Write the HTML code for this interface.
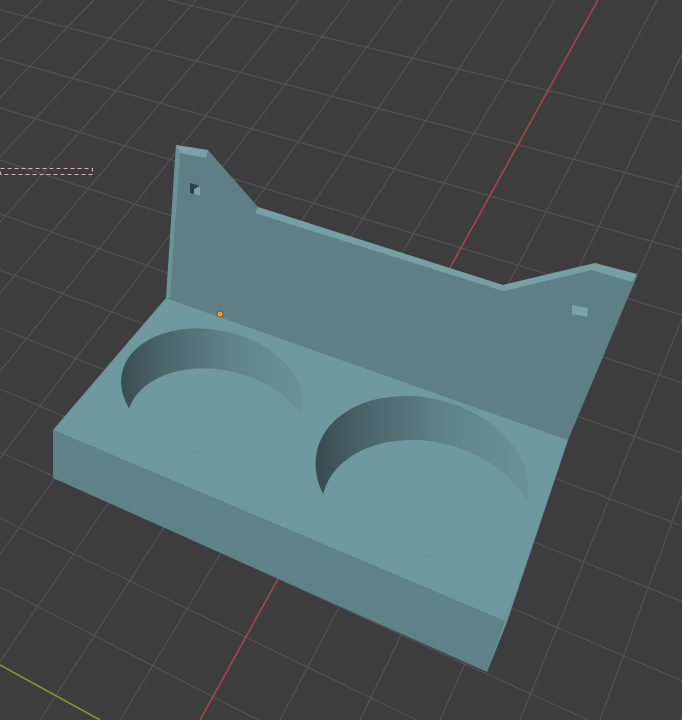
<!DOCTYPE html>
<html><head><meta charset="utf-8"><style>html,body{margin:0;padding:0;background:#3d3d3d;overflow:hidden;width:682px;height:720px}svg{display:block}</style></head>
<body>
<svg width="682" height="720" viewBox="0 0 682 720" xmlns="http://www.w3.org/2000/svg">
<defs>
<linearGradient id="w1" x1="0" y1="0" x2="1" y2="0">
<stop offset="0" stop-color="#33454a"/><stop offset="0.25" stop-color="#4a6469"/><stop offset="0.6" stop-color="#5f8389"/><stop offset="1" stop-color="#6d939a"/>
</linearGradient>
<clipPath id="c1"><ellipse cx="212" cy="392" rx="92" ry="62" transform="rotate(12 212 392)"/></clipPath>
<clipPath id="c2"><ellipse cx="422" cy="476" rx="108" ry="78" transform="rotate(14 422 476)"/></clipPath>
</defs>
<rect width="682" height="720" fill="#3d3d3d"/>
<g stroke="#535353" stroke-width="1.2" fill="none" id="grid"></g>
<line x1="598" y1="0" x2="200" y2="720" stroke="#a8464e" stroke-width="1.6"/>
<line x1="0" y1="665" x2="100" y2="720" stroke="#7a9a3a" stroke-width="1.6"/>
<rect x="0.5" y="168.5" width="92" height="6" fill="none" stroke="#d8b0b4" stroke-width="1" stroke-dasharray="4 3"/>
<polygon points="176,145 208,150 258,207 503,285 595,263 637,276 568,440 166,298" fill="#5e7f85"/>
<polygon points="176,145 208,150 206,158 180,153" fill="#7aa2a9"/>
<polygon points="258,207 503,285 595,263 637,274 632,282 592,270 503,291 255,213" fill="#76a0a7"/>
<polygon points="176,145 180,153 170,298 166,298" fill="#6a9299"/>
<polygon points="190,183 200,186 200,196 190,193" fill="#2f3f42"/>
<polygon points="194,189 200,186 200,196 194,194" fill="#7aa2a9"/>
<polygon points="572,305 588,308 587,317 572,314" fill="#7aa2a9"/>
<polygon points="166,298 568,440 507,622 53,430" fill="#6f99a0"/>
<polygon points="53,430 507,622 487,672 53,478" fill="#5e8288"/>
<polygon points="507,622 568,440 566,446 487,672" fill="#6a9399"/>
<g clip-path="url(#c1)">
<rect x="110" y="320" width="200" height="150" fill="url(#w1)"/>
<ellipse cx="218" cy="432" rx="92" ry="62" transform="rotate(12 218 432)" fill="#6f99a0"/>
</g>
<g clip-path="url(#c2)">
<rect x="305" y="390" width="235" height="180" fill="url(#w1)"/>
<ellipse cx="428" cy="520" rx="108" ry="78" transform="rotate(14 428 520)" fill="#6f99a0"/>
</g>
<circle cx="220" cy="314" r="3" fill="#f0a030" stroke="#6a4a10" stroke-width="0.8"/>
</svg>
<script>
(function(){
var g=document.getElementById('grid');var ns='http://www.w3.org/2000/svg';
function L(x1,y1,x2,y2){var l=document.createElementNS(ns,'line');l.setAttribute('x1',x1);l.setAttribute('y1',y1);l.setAttribute('x2',x2);l.setAttribute('y2',y2);g.appendChild(l);}
var vx=1327,vy=-1280;
for(var k=-12;k<=14;k++){var bx=200+80*k;if(k==0)continue;
 var dx=bx-vx,dy=720-vy;var t=(0-vy)/dy;var tx=vx+dx*t;L(tx,0,bx,720);}
var ux=-2260,uy=-578;
var ys=[-40,10,58,108,160,214,270,328,389,452,518,587,745,830,920];
for(var i=0;i<ys.length;i++){var y0=ys[i];var s=(y0-uy)/(0-ux);L(0,y0,682,y0+s*682);}
})();
</script>
</body></html>
